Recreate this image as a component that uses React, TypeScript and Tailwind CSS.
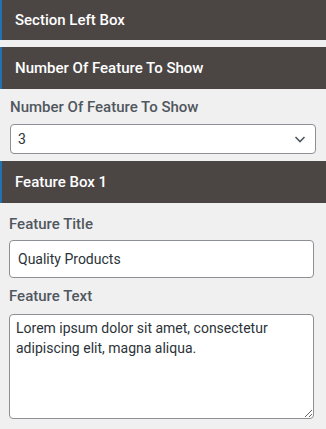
const Header = ({ title, className = "" }: { title: string; className?: string }) => (
  <div
    className={`flex items-center bg-[#4b4644] border-l-2 border-[#2271b1] pl-[13px] text-white text-[15px] font-medium ${className}`}
  >
    {title}
  </div>
);

export default function App() {
  return (
    <div
      className="w-[326px] h-[429px] overflow-hidden bg-[#f0f0f1]"
      style={{ fontFamily: "Roboto, 'Liberation Sans', sans-serif" }}
    >
      <Header title="Section Left Box" className="h-[40px]" />
      <Header title="Number Of Feature To Show" className="h-[42px] mt-[7px]" />

      <div className="px-[10px] pt-[8px] pb-[7px]">
        <label className="block text-[15px] leading-[20px] font-medium text-[#50575e] mb-[7px]">
          Number Of Feature To Show
        </label>
        <div className="relative">
          <select
            defaultValue="3"
            className="appearance-none w-full h-[30px] rounded-[4px] border border-[#8c8f94] bg-white pl-[7px] pr-6 text-[14px] text-[#2c3338] outline-none"
          >
            <option>1</option>
            <option>2</option>
            <option>3</option>
            <option>4</option>
          </select>
          <svg
            className="pointer-events-none absolute right-[10px] top-[10px]"
            width="12"
            height="10"
            viewBox="0 0 12 10"
            fill="none"
          >
            <path d="M1.5 3l4.5 4.5L10.5 3" stroke="#50575e" strokeWidth="1.6" />
          </svg>
        </div>
      </div>

      <Header title="Feature Box 1" className="h-[42px]" />

      <div className="pl-[9px] pr-[12px] pt-[11px]">
        <label className="block text-[15px] leading-[20px] font-medium text-[#50575e] mb-[6px]">
          Feature Title
        </label>
        <input
          type="text"
          defaultValue="Quality Products"
          className="block w-full h-[38px] rounded-[4px] border border-[#8c8f94] bg-white px-[8px] text-[14px] text-[#2c3338] outline-none"
        />
        <label className="block text-[15px] leading-[20px] font-medium text-[#50575e] mt-[8px] mb-[8px]">
          Feature Text
        </label>
        <textarea
          defaultValue="Lorem ipsum dolor sit amet, consectetur adipiscing elit, magna aliqua."
          className="block w-full h-[105px] rounded-[4px] border border-[#8c8f94] bg-white px-[6px] py-[3px] text-[14px] leading-[20px] text-[#2c3338] outline-none"
        />
      </div>
    </div>
  );
}
